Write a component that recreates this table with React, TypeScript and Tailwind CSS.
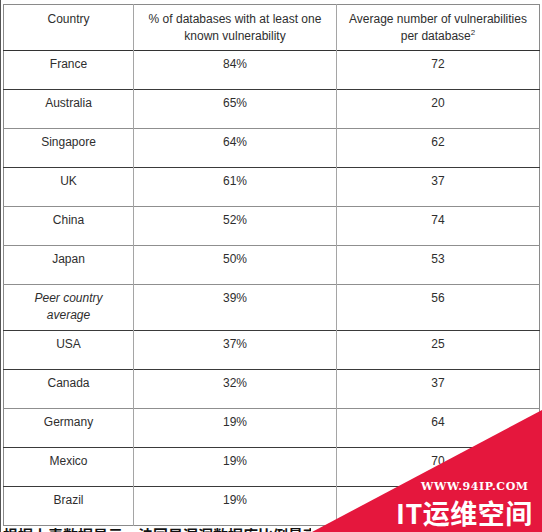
import React from "react";

const rows: { c: string; p: string; n: string; italic?: boolean; dark?: boolean }[] = [
  { c: "France", p: "84%", n: "72", dark: true },
  { c: "Australia", p: "65%", n: "20" },
  { c: "Singapore", p: "64%", n: "62", dark: true },
  { c: "UK", p: "61%", n: "37" },
  { c: "China", p: "52%", n: "74" },
  { c: "Japan", p: "50%", n: "53" },
  { c: "Peer country average", p: "39%", n: "56", italic: true, dark: true },
  { c: "USA", p: "37%", n: "25", dark: true },
  { c: "Canada", p: "32%", n: "37" },
  { c: "Germany", p: "19%", n: "64", dark: true },
  { c: "Mexico", p: "19%", n: "70", dark: true },
  { c: "Brazil", p: "19%", n: "" },
];

export default function App() {
  return (
    <div
      className="relative w-[542px] h-[532px] overflow-hidden bg-white border-l border-[#555] text-[#2e2e2e]"
      style={{ fontFamily: '"Liberation Sans", Arial, sans-serif' }}
    >
      <div className="pl-[2px] pt-[4px]">
        <table className="table-fixed border-collapse w-[536px] border border-[#8a8a8a] text-[12px] leading-[17px] text-center">
          <colgroup>
            <col className="w-[130px]" />
            <col className="w-[203px]" />
            <col className="w-[203px]" />
          </colgroup>
          <thead>
            <tr className="h-[46px] border-b border-[#333]">
              <th className="font-normal align-top pt-[6px] px-1 border-r border-[#a5a5a5]">Country</th>
              <th className="font-normal align-top pt-[6px] px-1 border-r border-[#a5a5a5]">
                % of databases with at least one known vulnerability
              </th>
              <th className="font-normal align-top pt-[6px] px-1">
                Average number of vulnerabilities per database
                <span className="relative -top-[5px] text-[8px] leading-none">2</span>
              </th>
            </tr>
          </thead>
          <tbody>
            {rows.map((r, i) => (
              <tr
                key={i}
                className={
                  (r.italic ? "h-[46px] " : "h-[39px] ") +
                  (i === rows.length - 1 ? "" : r.dark ? "border-b border-[#3a3a3a]" : "border-b border-[#8f8f8f]")
                }
              >
                <td className={"align-top pt-[5px] px-6 border-r border-[#a5a5a5]" + (r.italic ? " italic" : "")}>
                  {r.c}
                </td>
                <td className="align-top pt-[5px] px-1 border-r border-[#a5a5a5]">{r.p}</td>
                <td className="align-top pt-[5px] px-1">{r.n}</td>
              </tr>
            ))}
          </tbody>
        </table>
      </div>
      <div className="h-[5px] w-[310px] overflow-hidden mt-[2px]">
        <div
          className="text-[15px] leading-[15px] font-bold text-[#111] whitespace-nowrap -mt-[1px] pl-[2px]"
          style={{ fontFamily: '"Noto Sans CJK SC", sans-serif' }}
        >
          根据上表数据显示，法国是漏洞数据库比例最高的国家
        </div>
      </div>

      <svg className="absolute right-0 bottom-0" width="230" height="124" viewBox="0 0 230 124">
        <polygon points="0,124 230,2 230,124" fill="#e5173d" />
      </svg>
      <div
        className="absolute left-[420px] top-[480px] text-white font-bold text-[11px] leading-[14px] tracking-[0.6px] whitespace-nowrap"
        style={{ fontFamily: '"DejaVu Serif", "Liberation Serif", serif' }}
      >
        WWW.94IP.COM
      </div>
      <div
        className="absolute left-[395px] top-[496px] text-white font-bold text-[27px] leading-[34px] tracking-[0.5px] whitespace-nowrap"
        style={{ fontFamily: '"Noto Sans CJK SC", sans-serif' }}
      >
        IT运维空间
      </div>
    </div>
  );
}
